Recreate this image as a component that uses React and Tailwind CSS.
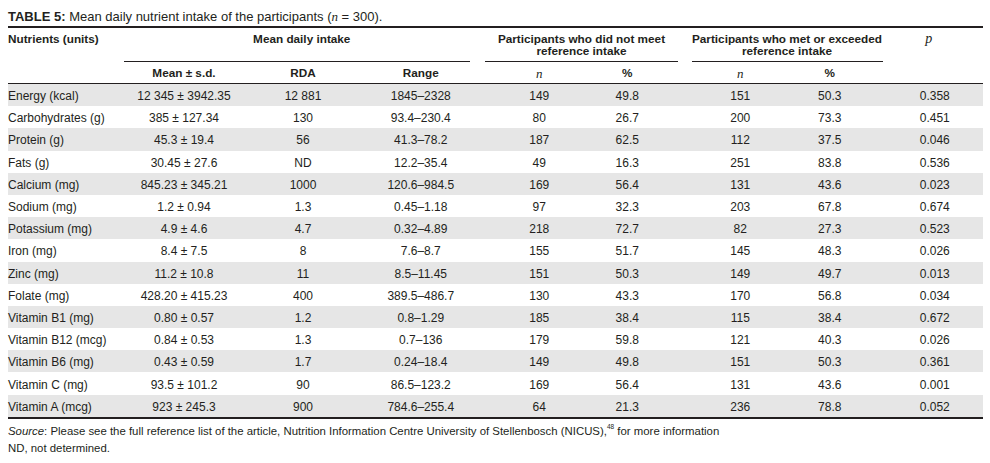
import React from 'react';

// ── Data ─────────────────────────────────────────────────────────────────────

const ROWS = [
  ['Energy (kcal)', '12 345 ± 3942.35', '12 881', '1845–2328', '149', '49.8', '151', '50.3', '0.358'],
  ['Carbohydrates (g)', '385 ± 127.34', '130', '93.4–230.4', '80', '26.7', '200', '73.3', '0.451'],
  ['Protein (g)', '45.3 ± 19.4', '56', '41.3–78.2', '187', '62.5', '112', '37.5', '0.046'],
  ['Fats (g)', '30.45 ± 27.6', 'ND', '12.2–35.4', '49', '16.3', '251', '83.8', '0.536'],
  ['Calcium (mg)', '845.23 ± 345.21', '1000', '120.6–984.5', '169', '56.4', '131', '43.6', '0.023'],
  ['Sodium (mg)', '1.2 ± 0.94', '1.3', '0.45–1.18', '97', '32.3', '203', '67.8', '0.674'],
  ['Potassium (mg)', '4.9 ± 4.6', '4.7', '0.32–4.89', '218', '72.7', '82', '27.3', '0.523'],
  ['Iron (mg)', '8.4 ± 7.5', '8', '7.6–8.7', '155', '51.7', '145', '48.3', '0.026'],
  ['Zinc (mg)', '11.2 ± 10.8', '11', '8.5–11.45', '151', '50.3', '149', '49.7', '0.013'],
  ['Folate (mg)', '428.20 ± 415.23', '400', '389.5–486.7', '130', '43.3', '170', '56.8', '0.034'],
  ['Vitamin B1 (mg)', '0.80 ± 0.57', '1.2', '0.8–1.29', '185', '38.4', '115', '38.4', '0.672'],
  ['Vitamin B12 (mcg)', '0.84 ± 0.53', '1.3', '0.7–136', '179', '59.8', '121', '40.3', '0.026'],
  ['Vitamin B6 (mg)', '0.43 ± 0.59', '1.7', '0.24–18.4', '149', '49.8', '151', '50.3', '0.361'],
  ['Vitamin C (mg)', '93.5 ± 101.2', '90', '86.5–123.2', '169', '56.4', '131', '43.6', '0.001'],
  ['Vitamin A (mcg)', '923 ± 245.3', '900', '784.6–255.4', '64', '21.3', '236', '78.8', '0.052'],
];

// column widths sum to 975 (x 8 → 983)
const GRID = 'grid grid-cols-[116px_120px_118px_117.5px_103.5px_100.5px_101.5px_97.5px_100.5px]';

// per-column nudges so the centred figures sit where the print has them
const CELL = [
  'text-left',
  'text-center',
  'text-center',
  'text-center',
  'text-center pl-[16px]',
  'text-center pr-[12px]',
  'text-center pl-[12px]',
  'text-center pr-[8px]',
  'text-center pl-[4px]',
];

const serifItalic = { fontFamily: '"Liberation Serif", serif' };

function Row({ cells, shaded }) {
  return (
    <div className={`${GRID} h-[22.2px] pt-[2px] items-center ${shaded ? 'bg-[#e6e6e6]' : ''}`}>
      {cells.map((c, i) => (
        <div key={i} className={`${CELL[i]} whitespace-nowrap`}>{c}</div>
      ))}
    </div>
  );
}

export default function App() {
  return (
    <div className="w-[990px] h-[463px] bg-white text-[#231f20] text-[12px] leading-none px-[8px] pt-[9px] font-['Liberation_Sans',Arial,sans-serif]">
      {/* Caption */}
      <div className="text-[13px] leading-[13px] pt-[1px] h-[13px] whitespace-nowrap">
        <span className="font-bold">TABLE 5:</span> Mean daily nutrient intake of the participants (
        <i style={serifItalic}>n</i> = 300).
      </div>

      {/* Table */}
      <div className="mt-[4px] w-[975px] border-t-2 border-[#231f20]">
        {/* Header row 1 */}
        <div className="flex h-[34px] pt-[5px] font-bold text-[11.75px] leading-[11.5px]">
          <div className="w-[116px] whitespace-nowrap">Nutrients (units)</div>
          <div className="w-[355.5px] flex flex-col">
            <div className="text-center">Mean daily intake</div>
            <div className="mt-auto mr-[10px] border-b border-[#231f20]" />
          </div>
          <div className="w-[204px] flex flex-col">
            <div className="text-center whitespace-nowrap">Participants who did not meet<br />reference intake</div>
            <div className="mt-auto mx-[5.5px] border-b border-[#231f20]" />
          </div>
          <div className="w-[199px] flex flex-col">
            <div className="text-center pl-[8px] whitespace-nowrap">Participants who met or exceeded<br />reference intake</div>
            <div className="mt-auto ml-[8.5px] border-b border-[#231f20]" />
          </div>
          <div className="w-[100.5px] text-center text-[14px] font-normal italic pr-[8px]" style={serifItalic}>p</div>
        </div>

        {/* Header row 2 */}
        <div className={`${GRID} h-[22px] pt-[1px] items-center font-bold text-[11.75px] border-b-[1.5px] border-[#231f20]`}>
          <div />
          <div className="text-center">Mean ± s.d.</div>
          <div className="text-center">RDA</div>
          <div className="text-center">Range</div>
          <div className="text-center pl-[16px] italic font-normal text-[13px]" style={serifItalic}>n</div>
          <div className="text-center pr-[12px]">%</div>
          <div className="text-center pl-[12px] italic font-normal text-[13px]" style={serifItalic}>n</div>
          <div className="text-center pr-[8px]">%</div>
          <div />
        </div>

        {/* Body */}
        <div className="border-b-2 border-[#231f20]">
          {ROWS.map((r, i) => (
            <Row key={r[0]} cells={r} shaded={i % 2 === 0} />
          ))}
        </div>
      </div>

      {/* Notes */}
      <div className="mt-[4.5px] text-[11.4px] leading-[17px]">
        <div className="whitespace-nowrap">
          <i>Source</i>: Please see the full reference list of the article, Nutrition Information Centre University of Stellenbosch (NICUS),
          <sup className="text-[6.5px] align-[3px]">48</sup> for more information
        </div>
        <div>ND, not determined.</div>
      </div>
    </div>
  );
}
